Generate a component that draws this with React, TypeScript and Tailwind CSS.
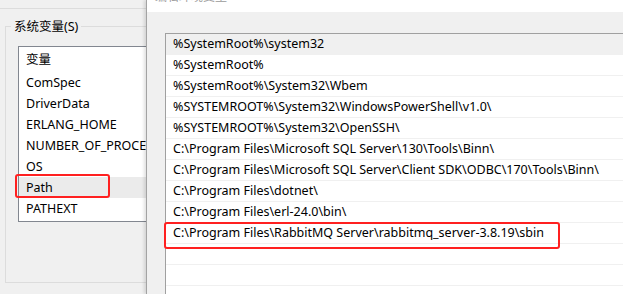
const sysVars = ["ComSpec", "DriverData", "ERLANG_HOME", "NUMBER_OF_PROCESSORS", "OS", "Path", "PATHEXT"];

const paths = [
  "%SystemRoot%\\system32",
  "%SystemRoot%",
  "%SystemRoot%\\System32\\Wbem",
  "%SYSTEMROOT%\\System32\\WindowsPowerShell\\v1.0\\",
  "%SYSTEMROOT%\\System32\\OpenSSH\\",
  "C:\\Program Files\\Microsoft SQL Server\\130\\Tools\\Binn\\",
  "C:\\Program Files\\Microsoft SQL Server\\Client SDK\\ODBC\\170\\Tools\\Binn\\",
  "C:\\Program Files\\dotnet\\",
  "C:\\Program Files\\erl-24.0\\bin\\",
  "C:\\Program Files\\RabbitMQ Server\\rabbitmq_server-3.8.19\\sbin",
  "",
  "",
  "",
];

export default function App() {
  return (
    <div className="relative flex h-[294px] w-[623px] overflow-hidden bg-[#f0f0f0] font-['Noto_Sans','Noto_Sans_CJK_SC',sans-serif] text-[12.5px] text-black">
      {/* 环境变量窗口 (背后) */}
      <div className="flex w-[146px] shrink-0 flex-col overflow-hidden">
        <div className="h-[9px] w-[200px] shrink-0 border-b border-[#dcdcdc]" />
        <fieldset className="mt-[9px] ml-[5px] h-[265px] w-[200px] shrink-0 border border-[#dcdcdc]">
          <legend className="ml-[5px] px-[3px] pt-[1px] leading-[16px]">系统变量(S)</legend>
          <div className="mt-[11px] ml-[12px] h-[176px] w-[200px] border border-[#828790] bg-white">
            <div className="flex h-[25px] items-center pl-[7px] pt-[2px]">变量</div>
            {sysVars.map((v) => (
              <div
                key={v}
                className={`flex h-[21px] items-center whitespace-nowrap pl-[7px] pt-[1px] ${v === "Path" ? "bg-[#ebebeb]" : ""}`}
              >
                {v}
              </div>
            ))}
          </div>
        </fieldset>
      </div>

      {/* 编辑环境变量 对话框 */}
      <div className="flex flex-1 flex-col border-l border-[#a3a3a3] shadow-[-2px_0_3px_rgba(0,0,0,0.12)]">
        <div className="h-[12px] shrink-0 overflow-hidden bg-white">
          <div className="-mt-[9px] pl-[8px] text-[12px] leading-[12px] text-[#9a9a9a]">编辑环境变量</div>
        </div>
        <div className="ml-[18px] mt-[21px] flex-1 border-t border-l border-[#a0a0a0] bg-white">
          {paths.map((p, i) => (
            <div
              key={i}
              className={`flex h-[21px] items-center whitespace-nowrap border-b border-[#f0f0f0] pl-[7px] pt-[1px] ${i === 0 ? "bg-[#f0f0f0]" : ""}`}
            >
              {p}
            </div>
          ))}
        </div>
      </div>

      {/* 红框标注 */}
      <div className="absolute left-[15px] top-[174px] h-[24px] w-[95px] rounded-[3px] border-2 border-[#ff2020]" />
      <div className="absolute left-[164px] top-[222px] h-[27px] w-[396px] rounded-[3px] border-2 border-[#ff2020]" />
    </div>
  );
}
